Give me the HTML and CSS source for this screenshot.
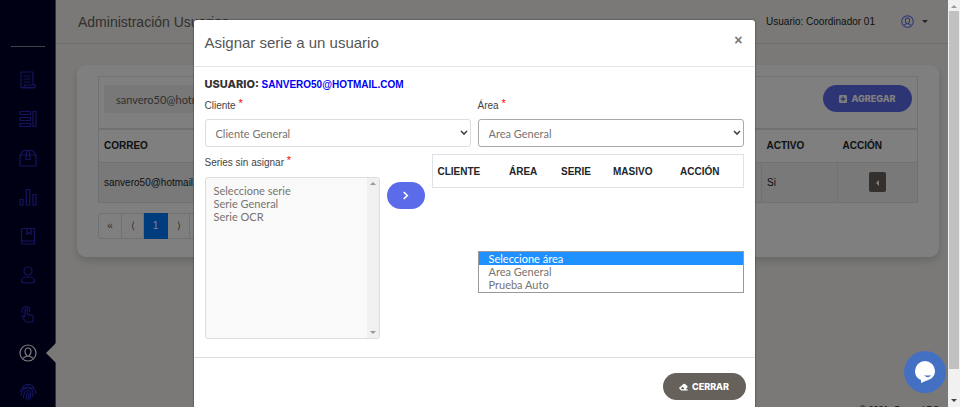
FILE: index.html
```html
<!DOCTYPE html>
<html lang="es">
<head>
<meta charset="utf-8">
<meta name="viewport" content="width=device-width, initial-scale=1">
<title>Administración Usuarios</title>
<link rel="stylesheet" href="styles.css">
</head>
<body>
<div class="viewport">
  <div class="app">
    <nav class="sidebar" aria-label="Menú principal">
      <div class="sidebar-brand"></div>
      <a href="#" aria-label="Documentos"><svg viewBox="0 0 18 18"><path d="M2 1h12v13M2 1v15.500h12.500M4 17h10c2 0 2.500-1 2.500-3H6c0 2-.8 3-2 3s-2-1-2-2M4.500 5h7M4.500 8h7M4.500 11h7"/></svg></a>
      <a href="#" aria-label="Series"><svg viewBox="0 0 18 18"><path d="M1 1.500h10.500v3H1zM1 7.500h10.500v3H1zM1 13.500h10.500v3H1zM14 1.500h3v15h-3z"/></svg></a>
      <a href="#" aria-label="Archivo"><svg viewBox="0 0 18 18"><path d="M1 6v11h16V6l-3.500-4.500h-9zM1 6h16M7 6v4.500h4V6M7 6l1-4.500M11 6l-1-4.500"/></svg></a>
      <a href="#" aria-label="Reportes"><svg viewBox="0 0 18 18"><path d="M1 11.500h3V17H1zM7.300 1.500h3.400V17H7.300zM14 6.500h3V17h-3z"/></svg></a>
      <a href="#" aria-label="Catálogos"><svg viewBox="0 0 18 18"><path d="M3.500 1.500h12v15.500H4c-1 0-1.500-.6-1.500-1.500V2.500c0-.6.400-1 1-1zM2.500 14h13M8 1.500V7l2-1.500L12 7V1.500"/></svg></a>
      <a href="#" aria-label="Personas"><svg viewBox="0 0 18 18"><circle cx="9" cy="5" r="4"/><path d="M2.500 15.500c0-3 2.500-4.500 4.500-4.500h4c2 0 4.500 1.500 4.500 4.500 0 1-1 1.500-6.500 1.500s-6.500-.5-6.500-1.500z"/></svg></a>
      <a href="#" aria-label="Acciones"><svg viewBox="0 0 18 18"><path d="M6 11V5c0-1.600 2.400-1.600 2.400 0v4.300l4.600.9c1 .2 1.400.8 1.300 1.800L13.500 17H7L3.500 12.500c-.8-1.200.8-2.400 1.700-1.400L6 12M4 8a3.800 3.800 0 1 1 6.500-1M10.500 9.800v1.700"/></svg></a>
      <a href="#" class="active" aria-current="page" aria-label="Usuarios"><svg viewBox="0 0 18 18"><circle cx="9" cy="9" r="8"/><path d="M9 4c-2 0-3 1.500-3 3.500 0 1.400.6 2.800 1.500 3.500v1.200L4 14M9 4c2 0 3 1.500 3 3.500 0 1.400-.6 2.800-1.500 3.500v1.200L14 14M7.500 12.200h3"/></svg></a>
      <a href="#" aria-label="Biometría"><svg viewBox="0 0 18 18"><path d="M3 5c3-5 9-5 12 0M1.300 9c.4-6 15-6 15.400 0v2M2 13c1-2-.5-8 7-8 4.500 0 5.500 3 5 9M4 15c2-3-.5-7.500 5-7.500 3.500 0 3 4.500 2 9M6.500 16.500c2-3 .5-6.500 2.500-6.500s.5 4.500-.5 7.500M6 2h6"/></svg></a>
    </nav>
    <main class="main">
      <header class="topbar">
        <h1>Administración Usuarios</h1>
        <div class="account">
          <span>Usuario: Coordinador 01</span>
          <button type="button" class="account-menu" aria-label="Cuenta"><svg viewBox="0 0 18 18"><circle cx="9" cy="9" r="8"/><path d="M9 4c-2 0-3 1.500-3 3.500 0 1.400.6 2.800 1.500 3.500v1.200L4 14M9 4c2 0 3 1.500 3 3.500 0 1.400-.6 2.800-1.500 3.500v1.200L14 14M7.500 12.200h3"/></svg><i class="caret"></i></button>
        </div>
      </header>
      <section class="card">
        <div class="toolbar">
          <input type="text" value="sanvero50@hotmail.com" aria-label="Buscar correo">
          <button type="button" class="pill primary"><svg viewBox="0 0 10 10"><path fill="#fff" d="M1.500 0h7Q10 0 10 1.500v7Q10 10 8.500 10h-7Q0 10 0 8.500v-7Q0 0 1.500 0"/><path stroke="#5b6bea" stroke-width="1.600" d="M5 2v6M2 5h6"/></svg>AGREGAR</button>
        </div>
        <table class="users">
          <thead><tr><th class="c-mail">CORREO</th><th class="c-active">ACTIVO</th><th class="c-action">ACCIÓN</th></tr></thead>
          <tbody><tr><td>sanvero50@hotmail.com</td><td>Si</td><td class="center"><button type="button" class="row-menu" aria-label="Opciones"><i></i></button></td></tr></tbody>
        </table>
        <div class="pager">
          <button type="button">«</button><button type="button">⟨</button><button type="button" class="current">1</button><button type="button">⟩</button><button type="button">»</button>
        </div>
      </section>
      <footer class="site-footer">© 2021, Grupo ADS</footer>
    </main>
  </div>

  <div class="backdrop">
    <div class="modal" role="dialog" aria-modal="true" aria-labelledby="modal-title">
      <header class="modal-header">
        <h2 id="modal-title">Asignar serie a un usuario</h2>
        <button type="button" class="close" aria-label="Cerrar ventana">×</button>
      </header>
      <div class="modal-body">
        <p class="who"><b>USUARIO:</b> <span>SANVERO50@HOTMAIL.COM</span></p>
        <div class="fields">
          <div class="field">
            <label for="cliente">Cliente <sup>*</sup></label>
            <div class="select"><select id="cliente"><option>Cliente General</option></select><svg viewBox="0 0 8 6"><path d="M1 1l3 3 3-3"/></svg></div>
          </div>
          <div class="field">
            <label for="area">Área <sup>*</sup></label>
            <div class="select open"><select id="area"><option>Area General</option></select><svg viewBox="0 0 8 6"><path d="M1 1l3 3 3-3"/></svg>
              <ul class="options" role="listbox" aria-label="Área">
                <li role="option" class="hover">Seleccione área</li><li role="option">Area General</li><li role="option">Prueba Auto</li>
              </ul>
            </div>
          </div>
        </div>
        <div class="assign">
          <div class="series">
            <label for="series">Series sin asignar <sup>*</sup></label>
            <div class="listbox">
              <select id="series" multiple><option>Seleccione serie</option><option>Serie General</option><option>Serie OCR</option></select>
              <div class="list-scroll"><i class="up"></i><i class="down"></i></div>
            </div>
          </div>
          <button type="button" class="pill primary move" aria-label="Asignar"><svg viewBox="0 0 8 10"><path d="M2 1l4 4-4 4"/></svg></button>
          <table class="assigned">
            <thead><tr><th class="w1">CLIENTE</th><th class="w2">ÁREA</th><th class="w2">SERIE</th><th class="w3">MASIVO</th><th>ACCIÓN</th></tr></thead>
          </table>
        </div>
      </div>
      <footer class="modal-footer">
        <button type="button" class="pill dark"><svg viewBox="0 0 12 10"><path fill="#fff" d="M6 1Q7 0 8 1l3 2.700q1 1 0 2L9 8h2.500v1.500H3L.6 7.300q-1-1 0-1.600zM2.500 6.500L4 8h2.200l1-1L4.600 4.600z" fill-rule="evenodd"/></svg>CERRAR</button>
      </footer>
    </div>
  </div>
  <button type="button" class="chat" aria-label="Chat"><svg viewBox="0 0 22 22"><path fill="#fff" d="M11 0a10 10 0 0 1 10 10c0 6-5 9-9.500 10L7 22v-3C3 17.500 1 14 1 10A10 10 0 0 1 11 0"/><path fill="#4470c4" d="M10 14q3.500 1 7 0-3 4.500-7 0"/></svg></button>
</div>
<div class="scrollbar" aria-hidden="true"><i class="up"></i><div class="thumb"></div><i class="down"></i></div>
</body>
</html>
```
FILE: styles.css
```css
* { box-sizing: border-box; }
body {
  margin: 0;
  height: 100vh;
  display: flex;
  overflow: hidden;
  font-family: "Liberation Sans", Arial, sans-serif;
  font-size: 10px;
  color: #212529;
}
h1, h2, p, ul { margin: 0; padding: 0; font-weight: 400; }
button, input, select { font: inherit; margin: 0; }
button { border: 0; padding: 0; cursor: pointer; }
svg { fill: none; display: block; }

.viewport { position: relative; flex: 1; min-width: 0; overflow: hidden; }
.app { display: flex; height: 100%; }

.sidebar {
  width: 56px;
  background: #00002a;
  border-right: 1px solid #66615b;
  display: flex;
  flex-direction: column;
  align-items: center;
  flex-shrink: 0;
}
.sidebar-brand { width: 34px; height: 47px; flex-shrink: 0; border-bottom: 1px solid #88888c; margin-bottom: 13px; }
.sidebar a {
  width: 100%;
  height: 39px;
  flex-shrink: 0;
  display: flex;
  align-items: center;
  justify-content: center;
  position: relative;
}
.sidebar svg { width: 18px; height: 18px; stroke: #2828b8; stroke-width: 1.200; }
.sidebar .active svg { stroke: #fff; }
.sidebar .active::after {
  content: "";
  position: absolute;
  right: -1px;
  border: 10px solid transparent;
  border-left-width: 0;
  border-right-color: #f4f3ef;
}

.main { flex: 1; min-width: 0; display: flex; flex-direction: column; background: #f4f3ef; }
.topbar {
  height: 44px;
  flex-shrink: 0;
  padding: 0 20px 0 22px;
  display: flex;
  align-items: center;
  justify-content: space-between;
  border-bottom: 1px solid #dddddb;
}
.topbar h1 { font-size: 14px; color: #66615b; }
.account { display: flex; align-items: center; gap: 26px; }
.account-menu { display: flex; align-items: center; gap: 8px; background: none; }
.account-menu svg { width: 13px; height: 13px; stroke: #5b6bea; stroke-width: 1.400; }
.caret { border: 3px solid transparent; border-top-color: #444; border-bottom: 0; }

.card {
  margin: 21px 9px 0 21px;
  padding: 11px 21px 18px;
  border-radius: 9px;
  background: #fff;
  box-shadow: 0 4px 8px rgba(0, 0, 0, .15);
}
.toolbar {
  height: 52px;
  padding: 8px 5px 0;
  display: flex;
  justify-content: space-between;
  align-items: flex-start;
  border: 1px solid #dee2e6;
  border-bottom: 0;
}
.toolbar input {
  width: 200px;
  height: 28px;
  border: 0;
  border-radius: 3px;
  padding: 0 12px;
  background: #f0f0f0;
  color: #66615b;
  font-family: Lato, sans-serif;
  font-size: 11px;
}
.pill {
  display: flex;
  align-items: center;
  justify-content: center;
  gap: 4px;
  height: 27px;
  border-radius: 14px;
  color: #fff;
  font-family: Inter, sans-serif;
  font-size: 9px;
  font-weight: 800;
}
.toolbar .pill { width: 89px; }
.primary { background: #5b6bea; }
.dark { background: #66615b; width: 83px; }
.toolbar .pill svg { width: 8px; height: 8px; }
.dark svg { width: 9px; height: 8px; }

table { border-collapse: collapse; }
th { text-align: left; font-weight: 700; }
.users { width: 100%; table-layout: fixed; border: 1px solid #dee2e6; }
.users th { height: 33px; padding: 0 5px; border-top: 2px solid #dee2e6; }
.users td { height: 40px; padding: 0 5px; border: 1px solid #dee2e6; background: #f2f2f2; }
.c-active { width: 76px; }
.c-action { width: 80px; }
.users .center { text-align: center; }
.row-menu { width: 17px; height: 20px; border-radius: 2px; background: #66615b; }
.row-menu i { display: inline-block; border: 3px solid transparent; border-right-color: #fff; border-left: 0; }

.pager { display: flex; margin-top: 10px; }
.pager button { width: 22px; height: 26px; background: #fff; border: 1px solid #dee2e6; border-left-width: 0; color: #66615b; }
.pager button:first-child { width: 24px; border-left-width: 1px; border-radius: 3px 0 0 3px; }
.pager button:last-child { border-radius: 0 3px 3px 0; }
.pager .current { width: 24px; background: #007bff; border-color: #007bff; color: #fff; }
.site-footer { margin-top: auto; height: 3px; padding-right: 9px; font-size: 9px; line-height: 10px; text-align: right; flex-shrink: 0; }

.backdrop { position: absolute; inset: 0; padding-top: 20px; overflow: hidden; background: rgba(0, 0, 0, .5); }
.modal {
  width: 100%;
  max-width: 561px;
  margin: 0 auto;
  background: #fff;
  border-radius: 3px;
  box-shadow: 0 0 1px 1px rgba(0, 0, 0, .2);
}
.modal-header {
  height: 47px;
  padding: 0 12px 2px 11px;
  display: flex;
  align-items: center;
  justify-content: space-between;
  border-bottom: 1px solid #e4e7ea;
}
.modal h2 { font-size: 15px; color: #555; }
.close { background: none; font-size: 14px; font-weight: 700; line-height: 14px; color: #777; margin-bottom: 4px; }
.modal-body { padding: 10px 11px 18px; }
.who { height: 14px; line-height: 14px; font-weight: 700; color: #333; }
.who b { font-family: Inter, sans-serif; font-size: 11px; font-weight: 800; }
.who span { color: #0000f5; }
.fields { display: flex; gap: 7px; margin-top: 8px; }
.field { flex: 1; min-width: 0; }
label { display: block; height: 14px; line-height: 14px; color: #444; }
sup { color: red; line-height: 0; font-size: 11px; vertical-align: 2px; }
.select { position: relative; margin-top: 6px; }
.select select {
  display: block;
  width: 100%;
  height: 28px;
  appearance: none;
  border: 1px solid #ddd;
  border-radius: 3px;
  padding: 0 10px;
  background: #fff;
}
.select select, .listbox select, .options { font-family: Lato, sans-serif; font-size: 11px; color: #777370; }
.select svg { position: absolute; right: 3px; top: 11px; width: 8px; height: 6px; stroke: #444; stroke-width: 1.600; }
.select.open select { border-color: #aaa; outline: 0; }
.options {
  position: absolute;
  top: 132px;
  left: 0;
  right: 0;
  z-index: 1;
  border: 1px solid #999;
  background: #fff;
  list-style: none;
  line-height: 13px;
  padding-bottom: 1px;
}
.options li { padding-left: 10px; }
.options .hover { background: #1e90ff; color: #fff; }

.assign { display: flex; align-items: flex-start; gap: 7px; margin-top: 7px; }
.series { width: 175px; padding-top: 2px; }
.listbox {
  display: flex;
  height: 162px;
  margin-top: 7px;
  border: 1px solid #ddd;
  border-radius: 3px;
  overflow: hidden;
  background: #f9f9f9;
}
.listbox select { flex: 1; min-width: 0; border: 0; outline: 0; padding: 6px 8px; background: none; overflow: hidden; }
.listbox option { padding: 0; min-height: 13px; line-height: 13px; }
.list-scroll { width: 12px; padding: 4px 0; display: flex; flex-direction: column; align-items: center; justify-content: space-between; background: #f0f0f0; }
.up, .down { border: 3px solid transparent; }
.up { border-top: 0; border-bottom-color: #999; }
.down { border-bottom: 0; border-top-color: #999; }
.move { width: 38px; margin-top: 28px; }
.move svg { width: 7px; height: 9px; stroke: #fff; stroke-width: 2; }
.assigned { flex: 1; display: table; table-layout: fixed; border: 1px solid #dee2e6; }
.assigned th { height: 33px; padding: 0 5px; }
.w1 { width: 72px; }
.w2 { width: 52px; }
.w3 { width: 67px; }
.modal-footer { display: flex; justify-content: flex-end; padding: 15px 9px 20px; border-top: 1px solid #ddd; }

.chat {
  position: absolute;
  right: 2px;
  bottom: 14px;
  width: 42px;
  height: 42px;
  border-radius: 50%;
  display: flex;
  align-items: center;
  justify-content: center;
  background: #4470c4;
}
.chat svg { width: 22px; height: 22px; }

.scrollbar { width: 12px; padding: 5px 1px; display: flex; flex-direction: column; align-items: center; background: #f1f1f1; flex-shrink: 0; }
.scrollbar .thumb { width: 100%; flex: 0 1 358px; margin: 3px 0 auto; background: #c1c1c1; }
.scrollbar .down { border-top-color: #444; }
```
